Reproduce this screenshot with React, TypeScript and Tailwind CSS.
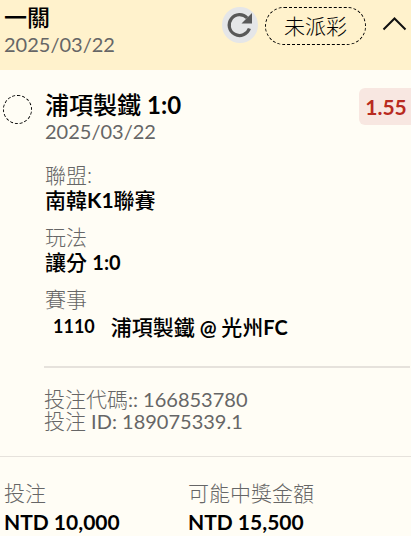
import type { ReactNode } from 'react';

function Field({ label, children }: { label: string; children: ReactNode }) {
  return (
    <div className="pb-3">
      <dt className="font-light leading-[25px] text-[#666]">{label}</dt>
      <dd className="font-medium leading-[25px]">{children}</dd>
    </div>
  );
}

function RefreshIcon() {
  return (
    <svg viewBox="0 0 36 36" className="size-9" aria-hidden="true">
      <path d="M27.4 21.5A10.4 10.4 0 1 1 25.2 11" fill="none" stroke="#595959" strokeWidth="3.2" />
      <path d="M30 6V16.5H19.5Z" fill="#595959" />
    </svg>
  );
}

export default function App() {
  return (
    <main className="overflow-hidden bg-[#fffdf5] font-['Lato','Noto_Sans_CJK_TC',sans-serif] text-[21px] text-black">
      <header className="flex h-[70px] items-start bg-[#fff2cc] pl-1 pr-1">
        <div className="grow pt-[3px]">
          <h1 className="text-[23px] font-medium leading-7">一關</h1>
          <p className="text-xl leading-[27px] text-[#666]">2025/03/22</p>
        </div>
        <button type="button" aria-label="重新整理" className="mt-[7px] flex size-9 items-center justify-center rounded-full bg-[#e5e6e8]">
          <RefreshIcon />
        </button>
        <span className="ml-[7px] mt-[7px] flex h-[38px] w-[101px] items-center justify-center rounded-full border border-dashed border-black font-light">
          未派彩
        </span>
        <button type="button" aria-label="收合" className="ml-4 mt-[11px]">
          <svg viewBox="0 0 25 26" className="h-[26px] w-[25px]" aria-hidden="true">
            <path d="M1.5 18.5 12.5 7.5 23.5 18.5" fill="none" stroke="#111" strokeWidth="2" />
          </svg>
        </button>
      </header>

      <section className="flex pl-[3px] pt-[18px]">
        <span className="mt-[7px] size-[29px] shrink-0 rounded-full border border-dashed border-black" />
        <div className="ml-[13px] grow">
          <div className="flex items-start justify-between">
            <div className="pt-0.5">
              <h2 className="text-2xl font-medium leading-[30px]">浦項製鐵 <b>1:0</b></h2>
              <p className="text-xl leading-[23px] text-[#666]">2025/03/22</p>
            </div>
            <span className="flex h-[37px] w-[52px] items-center justify-center rounded-l-md bg-[#f8e7e1] pl-0.5 font-bold text-[#b92b20]">
              1.55
            </span>
          </div>
          <dl className="pt-[19px]">
            <Field label="聯盟:">南韓<b>K1</b>聯賽</Field>
            <Field label="玩法">讓分 <b className="text-xl leading-none">1:0</b></Field>
            <Field label="賽事">
              <span className="flex items-center gap-4 pl-2 pt-[3px]">
                <b className="text-lg leading-[25px]">1110</b>
                <span>浦項製鐵<b className="text-xl leading-none"> @ </b>光州<b className="text-xl leading-none">FC</b></span>
              </span>
            </Field>
          </dl>
          <div className="-ml-px mr-px mt-[15px] border-t-2 border-[#e6e2dc] pt-5 text-xl text-[#666]">
            <p className="leading-[22px]"><span className="text-[21px] font-light leading-none">投注代碼</span>:: 166853780</p>
            <p className="leading-[22px]"><span className="text-[21px] font-light leading-none">投注</span> ID: 189075339.1</p>
          </div>
        </div>
      </section>

      <dl className="mt-6 grid grid-cols-[184px_1fr] border-t border-[#e6e2dc] pl-1 pt-[22px]">
        <div>
          <dt className="font-light leading-7 text-[#666]">投注</dt>
          <dd className="pt-px font-bold leading-7">NTD 10,000</dd>
        </div>
        <div>
          <dt className="font-light leading-7 text-[#666]">可能中獎金額</dt>
          <dd className="pt-px font-bold leading-7">NTD 15,500</dd>
        </div>
      </dl>
    </main>
  );
}
